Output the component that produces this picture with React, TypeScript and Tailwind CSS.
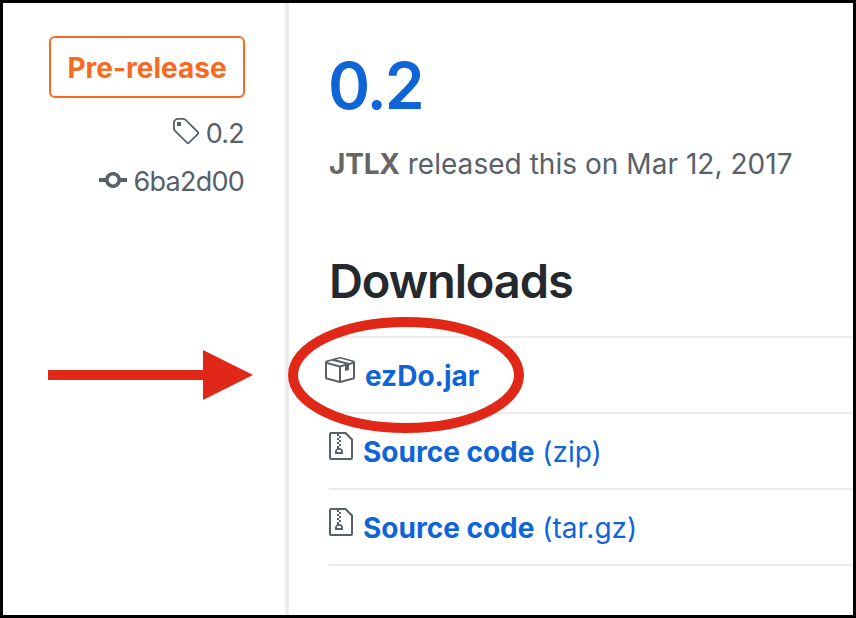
import type { ReactNode } from "react";

const ICONS = {
  tag: {
    w: 14,
    d: "M7.73 1.73C7.26 1.26 6.62 1 5.96 1H3.5C2.13 1 1 2.13 1 3.5v2.47c0 .66.27 1.3.73 1.77l6.06 6.06c.39.39 1.02.39 1.41 0l4.59-4.59a.996.996 0 0 0 0-1.41L7.73 1.73zM2.38 7.09c-.31-.3-.47-.7-.47-1.13V3.5c0-.88.72-1.59 1.59-1.59h2.47c.42 0 .83.16 1.13.47l6.14 6.13-4.73 4.73-6.13-6.15zM3.01 3h2v2H3V3h.01z",
  },
  commit: {
    w: 14,
    d: "M10.86 7c-.45-1.72-2-3-3.86-3-1.86 0-3.41 1.28-3.86 3H0v2h3.14c.45 1.72 2 3 3.86 3 1.86 0 3.41-1.28 3.86-3H14V7h-3.14zM7 10.2c-1.22 0-2.2-.98-2.2-2.2 0-1.22.98-2.2 2.2-2.2 1.22 0 2.2.98 2.2 2.2 0 1.22-.98 2.2-2.2 2.2z",
  },
  package: {
    w: 16,
    d: "M1 4.27v7.47c0 .45.3.84.75.97l6.5 1.73c.16.05.34.05.5 0l6.5-1.73c.45-.13.75-.52.75-.97V4.27c0-.45-.3-.84-.75-.97l-6.5-1.74a1.4 1.4 0 0 0-.5 0L1.75 3.3c-.45.13-.75.52-.75.97zm7 9.09l-6-1.59V5l6 1.61v6.75zM2 4l2.5-.67L11 5.06l-2.5.67L2 4zm13 7.77l-6 1.59V6.61l2-.55V8.5l2-.53V5.53L15 5v6.77zm-2-7.24L6.5 2.8l2-.53L15 4l-2 .53z",
  },
  zip: {
    w: 12,
    d: "M8.5 1H1a1 1 0 0 0-1 1v12a1 1 0 0 0 1 1h10a1 1 0 0 0 1-1V4.5L8.5 1zM11 14H1V2h3v1h1V2h3l3 3v9zM5 4V3h1v1H5zM4 4h1v1H4V4zm1 2V5h1v1H5zM4 6h1v1H4V6zm1 2V7h1v1H5zM4 9.28A2 2 0 0 0 3 11v1h4v-1a2 2 0 0 0-2-2V8H4v1.28zM6 10v1H4v-1h2z",
  },
};

function Icon({ name, className = "" }: { name: keyof typeof ICONS; className?: string }) {
  const { w, d } = ICONS[name];
  return (
    <svg
      width={w * 2}
      height={32}
      viewBox={`0 0 ${w} 16`}
      fill="currentColor"
      className={`shrink-0 text-[#586069] ${className}`}
    >
      <path fillRule="evenodd" d={d} />
    </svg>
  );
}

function DownloadRow({ icon, children }: { icon: ReactNode; children: ReactNode }) {
  return (
    <li className="flex h-[76px] items-start border-b-2 border-[#ededed] pt-4 text-[28px] leading-[42px] text-[#0f64d8]">
      {icon}
      {children}
    </li>
  );
}

export default function App() {
  return (
    <div className="relative flex h-[618px] w-[856px] overflow-hidden border-[3px] border-black bg-white font-['Inter','Liberation_Sans',sans-serif] whitespace-nowrap">
      <aside className="flex w-[286px] shrink-0 flex-col items-end border-r-4 border-[#ededed] pt-[33px] pr-10">
        <span className="flex h-[62px] w-[196px] items-center justify-center rounded-md border-2 border-[#f66a22] pt-px text-[28px] font-bold text-[#f66a22]">
          Pre-release
        </span>
        <a className="mt-[18px] flex h-8 items-center text-[27px] tracking-[-0.75px] text-[#586069]">
          <Icon name="tag" className="mr-[7px]" />
          <span className="mr-px pt-1">0.2</span>
        </a>
        <a className="mt-4 flex h-8 items-center text-[27px] tracking-[-0.75px] text-[#586069]">
          <Icon name="commit" className="mr-1.5" />
          <span className="mr-px pt-1">6ba2d00</span>
        </a>
      </aside>

      <main className="flex-1 pt-[47px] pl-10">
        <h1 className="-ml-px text-[64px] leading-[72px] font-semibold tracking-[-2px] text-[#0f64d8]">0.2</h1>
        <p className="mt-[21px] text-[28px] leading-[42px] tracking-[0.04px] text-[#586069]">
          <span className="font-bold tracking-[-0.2px] text-[#666]">JTLX</span> released this on Mar 12, 2017
        </p>
        <h2 className="mt-[66px] text-[47px] leading-[60px] font-semibold tracking-[-1.1px] text-[#24292e]">Downloads</h2>
        <ul className="mt-[25px] border-t-2 border-[#ededed]">
          <DownloadRow icon={<Icon name="package" className="-ml-1.5 mr-2.5" />}>
            <span className="pt-px font-bold">ezDo.jar</span>
          </DownloadRow>
          <DownloadRow icon={<Icon name="zip" className="mr-2.5" />}>
            <span className="pt-px">
              <span className="font-bold">Source code</span> (zip)
            </span>
          </DownloadRow>
          <DownloadRow icon={<Icon name="zip" className="mr-2.5" />}>
            <span className="pt-px">
              <span className="font-bold">Source code</span> (tar.gz)
            </span>
          </DownloadRow>
        </ul>
      </main>

      {/* Arrow and ring pointing out the file to download */}
      <svg className="absolute top-[314px] left-[45px]" width="480" height="120" viewBox="48 317 480 120">
        <path d="M48 370H203V350L253 375L203 400V380H48Z" fill="#e12717" />
        <ellipse cx="406" cy="375" rx="113" ry="53" fill="none" stroke="#e12717" strokeWidth="10" />
      </svg>
    </div>
  );
}
